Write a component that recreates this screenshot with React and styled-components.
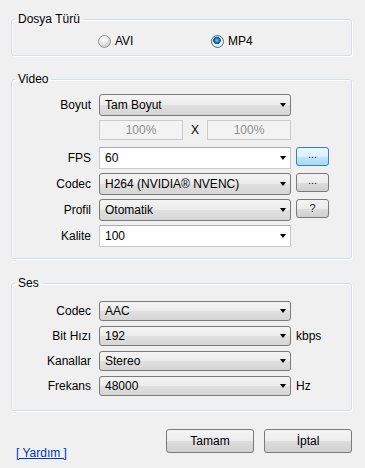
import styled, { createGlobalStyle } from 'styled-components'

const GlobalStyle = createGlobalStyle`
  body {
    margin: 0;
    background: #f0f0f0;
    font-family: "Liberation Sans", Arial, sans-serif;
    font-size: 12px;
    color: #000;
  }
`

const Dialog = styled.div`
  width: 365px;
  height: 468px;
  box-sizing: border-box;
  padding: 12px 13px 0 11px;
  display: flex;
  flex-direction: column;
`

const Group = styled.fieldset`
  margin: ${p => p.$mt || 0}px 0 0;
  padding: ${p => p.$pad};
  border: 1px solid #d5dfe5;
  border-radius: 3px;
  box-shadow: inset 1px 1px 0 #fff, 1px 1px 0 #fff;
  min-inline-size: auto;
`

const Legend = styled.legend`
  margin-left: 3px;
  padding: 0 3px;
  line-height: 14px;
`

const RadioRow = styled.div`
  display: flex;
  height: 16px;
  padding-left: 86px;
`

const RadioItem = styled.label`
  width: 113px;
  display: flex;
  align-items: center;
  gap: 4px;
`

const RadioDot = styled.span`
  width: 11px;
  height: 11px;
  border-radius: 50%;
  border: 1px solid ${p => (p.$on ? '#3d6f95' : '#9a9a9a')};
  background: ${p =>
    p.$on
      ? 'radial-gradient(circle at 45% 40%, #7fc6ee 0, #2a7fbf 2px, #0f4e82 3.5px, #e8e8e8 4px, #f8f8f8 6px)'
      : 'radial-gradient(circle at 40% 35%, #ffffff 0, #e9e9e9 4px, #cfcfcf 6px)'};
`

const Rows = styled.div`
  display: flex;
  flex-direction: column;
  gap: ${p => p.$gap}px;
`

const Row = styled.div`
  display: grid;
  grid-template-columns: 70px 192px auto;
  column-gap: 5px;
  padding-left: 12px;
  height: ${p => p.$h}px;
  margin-bottom: ${p => p.$mb || 0}px;
  align-items: center;
`

const Label = styled.span`
  text-align: right;
  padding-right: 3px;
  white-space: nowrap;
`

const Select = styled.div`
  box-sizing: border-box;
  height: 100%;
  display: flex;
  align-items: center;
  justify-content: space-between;
  padding: 0 4px 0 5px;
  border: 1px solid ${p => (p.$white ? '#c5c9d0' : '#7a7a7a')};
  border-top-color: ${p => (p.$white ? '#abadb3' : '#7a7a7a')};
  border-radius: ${p => (p.$white ? '0' : '3px')};
  background: ${p =>
    p.$white
      ? '#fff'
      : 'linear-gradient(#f4f4f4, #ececec 50%, #e0e0e0 51%, #d5d5d5)'};
`

const Arrow = styled.span`
  width: 0;
  height: 0;
  border-left: 3.5px solid transparent;
  border-right: 3.5px solid transparent;
  border-top: 4px solid #000;
`

const SizeBoxes = styled.div`
  display: grid;
  grid-template-columns: 84px 24px 84px;
  height: 100%;
  align-items: center;
`

const Percent = styled.div`
  box-sizing: border-box;
  height: 100%;
  display: flex;
  align-items: center;
  justify-content: center;
  border: 1px solid #cbcbcb;
  background: #f3f3f3;
  color: #8d8d8d;
`

const Times = styled.span`
  text-align: center;
`

const SmallButton = styled.div`
  box-sizing: border-box;
  width: 33px;
  height: 19px;
  align-self: start;
  display: flex;
  align-items: center;
  justify-content: center;
  border-radius: 3px;
  border: 1px solid ${p => (p.$hot ? '#3c7fb1' : '#7a7a7a')};
  background: ${p =>
    p.$hot
      ? 'linear-gradient(#eaf6fd, #d9f0fc 50%, #bee6fd 51%, #a7d9f5)'
      : 'linear-gradient(#f4f4f4, #ececec 50%, #dddddd 51%, #d0d0d0)'};
  color: #222;
  font-size: 11px;
  line-height: 1;
  padding-bottom: ${p => (p.$dots ? '4px' : '0')};
`

const Unit = styled.span`
  padding-left: 0;
`

const Footer = styled.div`
  margin-top: 18px;
  display: flex;
  align-items: flex-start;
`

const HelpLink = styled.a`
  margin: 17px 0 0 5px;
  color: #0033cc;
  text-decoration: underline;
  cursor: pointer;
`

const Buttons = styled.div`
  margin-left: auto;
  display: flex;
  gap: 10px;
`

const Button = styled.button`
  width: 88px;
  height: 24px;
  border: 1px solid #7a7a7a;
  border-radius: 3px;
  background: linear-gradient(#f4f4f4, #ececec 50%, #dddddd 51%, #d0d0d0);
  font-family: inherit;
  font-size: 12px;
  color: #000;
  padding: 0;
`

function Combo({ value, white }) {
  return (
    <Select $white={white}>
      <span>{value}</span>
      <Arrow />
    </Select>
  )
}

export default function App() {
  return (
    <>
      <GlobalStyle />
      <Dialog>
        <Group $pad="7px 0 6px">
          <Legend>Dosya Türü</Legend>
          <RadioRow>
            <RadioItem><RadioDot />AVI</RadioItem>
            <RadioItem><RadioDot $on />MP4</RadioItem>
          </RadioRow>
        </Group>

        <Group $mt={16} $pad="8px 0 11px">
          <Legend>Video</Legend>
          <Rows $gap={4}>
            <Row $h={22}>
              <Label>Boyut</Label>
              <Combo value="Tam Boyut" />
            </Row>
            <Row $h={20} $mb={3}>
              <span />
              <SizeBoxes>
                <Percent>100%</Percent>
                <Times>X</Times>
                <Percent>100%</Percent>
              </SizeBoxes>
            </Row>
            <Row $h={22}>
              <Label>FPS</Label>
              <Combo value="60" white />
              <SmallButton $hot $dots>...</SmallButton>
            </Row>
            <Row $h={22}>
              <Label>Codec</Label>
              <Combo value="H264 (NVIDIA® NVENC)" />
              <SmallButton $dots>...</SmallButton>
            </Row>
            <Row $h={22}>
              <Label>Profil</Label>
              <Combo value="Otomatik" />
              <SmallButton>?</SmallButton>
            </Row>
            <Row $h={22}>
              <Label>Kalite</Label>
              <Combo value="100" white />
            </Row>
          </Rows>
        </Group>

        <Group $mt={17} $pad="11px 0 14px">
          <Legend>Ses</Legend>
          <Rows $gap={5}>
            <Row $h={20}>
              <Label>Codec</Label>
              <Combo value="AAC" />
            </Row>
            <Row $h={20}>
              <Label>Bit Hızı</Label>
              <Combo value="192" />
              <Unit>kbps</Unit>
            </Row>
            <Row $h={20}>
              <Label>Kanallar</Label>
              <Combo value="Stereo" />
            </Row>
            <Row $h={20}>
              <Label>Frekans</Label>
              <Combo value="48000" />
              <Unit>Hz</Unit>
            </Row>
          </Rows>
        </Group>

        <Footer>
          <HelpLink>[ Yardım ]</HelpLink>
          <Buttons>
            <Button>Tamam</Button>
            <Button>İptal</Button>
          </Buttons>
        </Footer>
      </Dialog>
    </>
  )
}
